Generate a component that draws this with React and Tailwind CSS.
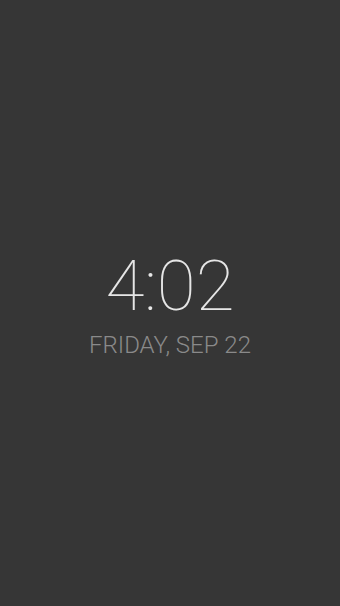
import React from "react";

const App = () => {
  return (
    <div className="h-[606px] w-full bg-[#363636] flex flex-col items-center justify-center font-['Roboto',sans-serif]">
      <div className="text-[71px] leading-none font-thin text-[#e6e6e6]">4:02</div>
      <div className="mt-[12px] text-[24px] leading-none font-light text-[#8a8a8a]">
        FRIDAY, SEP 22
      </div>
    </div>
  );
};

export default App;
